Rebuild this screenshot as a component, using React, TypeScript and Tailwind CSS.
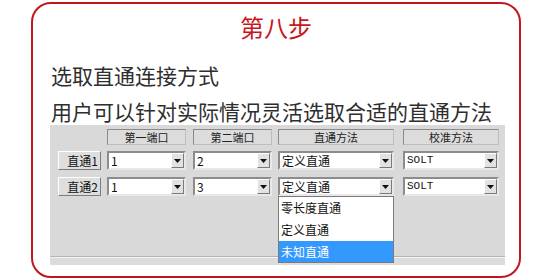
import React from 'react';

const ui = { fontFamily: '"Noto Sans CJK SC", "Liberation Sans", sans-serif' };

const Header: React.FC<{ label: string; w: string; ml: string }> = ({ label, w, ml }) => (
  <div
    className={`${w} ${ml} h-[16px] flex items-center justify-center text-[11px] text-[#222] bg-[#dcdcdc] border border-t-[#8a8a8a] border-l-[#8a8a8a] border-r-[#bdbdbd] border-b-[#bdbdbd] leading-none`}
  >
    {label}
  </div>
);

const Combo: React.FC<{ value: string; w: string; ml: string; serif?: boolean }> = ({ value, w, ml, serif }) => (
  <div
    className={`${w} ${ml} h-[19px] flex items-center bg-white border-2 border-t-[#8c8c8c] border-l-[#8c8c8c] border-r-[#e8e8e8] border-b-[#e8e8e8]`}
  >
    <span
      className="flex-1 pl-[2px] text-[12px] text-[#111] leading-none"
      style={serif ? { fontFamily: '"Liberation Mono", monospace', fontSize: 11 } : undefined}
    >
      {value}
    </span>
    <div className="w-[13px] h-[15px] bg-[#e2e2e2] border border-t-white border-l-white border-r-[#7a7a7a] border-b-[#7a7a7a] flex items-center justify-center">
      <svg width="7" height="4" viewBox="0 0 7 4">
        <path d="M0 0 H7 L3.5 4 Z" fill="#111" />
      </svg>
    </div>
  </div>
);

const RowButton: React.FC<{ label: string }> = ({ label }) => (
  <div className="w-[43px] ml-[8px] h-[19px] flex items-center justify-end pr-[2px] text-[12px] text-[#111] bg-[#dedede] border border-t-white border-l-white border-r-[#7c7c7c] border-b-[#7c7c7c] leading-none">
    {label}
  </div>
);

export default function App() {
  return (
    <div className="w-[550px] h-[280px] bg-white overflow-hidden" style={ui}>
      <div className="ml-[31px] mt-[2px] w-[490px] h-[276px] border-2 border-[#c2161e] rounded-[20px] flex flex-col">
        <div className="mt-[9px] text-center text-[24px] leading-[28px] text-[#c8161d]">第八步</div>
        <div className="mt-[22px] pl-[18px] text-[21px] leading-[24px] text-[#2e2e2e]">选取直通连接方式</div>
        <div className="mt-[12px] pl-[18px] text-[21px] leading-[24px] text-[#2e2e2e]">用户可以针对实际情况灵活选取合适的直通方法</div>

        <div className="relative mt-[2px] ml-[17px] w-[455px] h-[140px] bg-[#d9d9d9] flex flex-col">
          <div className="flex mt-[4px]">
            <div className="w-[51px]" />
            <Header label="第一端口" w="w-[79px]" ml="ml-[6px]" />
            <Header label="第二端口" w="w-[79px]" ml="ml-[7px]" />
            <Header label="直通方法" w="w-[116px]" ml="ml-[6px]" />
            <Header label="校准方法" w="w-[96px]" ml="ml-[9px]" />
          </div>

          <div className="flex mt-[6px]">
            <RowButton label="直通1" />
            <Combo value="1" w="w-[79px]" ml="ml-[6px]" />
            <Combo value="2" w="w-[79px]" ml="ml-[7px]" />
            <Combo value="定义直通" w="w-[116px]" ml="ml-[6px]" />
            <Combo value="SOLT" w="w-[96px]" ml="ml-[9px]" serif />
          </div>

          <div className="flex mt-[7px]">
            <RowButton label="直通2" />
            <Combo value="1" w="w-[79px]" ml="ml-[6px]" />
            <Combo value="3" w="w-[79px]" ml="ml-[7px]" />
            <Combo value="定义直通" w="w-[116px]" ml="ml-[6px]" />
            <Combo value="SOLT" w="w-[96px]" ml="ml-[9px]" serif />
          </div>

          <div className="mt-auto h-[9px] border-t border-[#b4b4b4] bg-[#dcdcdc] shadow-[inset_0_1px_0_#f4f4f4]" />

          {/* open dropdown list */}
          <div className="absolute left-[228px] top-[71px] w-[116px] h-[67px] bg-white border border-[#7a7a7a] flex flex-col text-[12px] text-[#111]">
            <div className="h-[22px] flex items-center pl-[2px]">零长度直通</div>
            <div className="h-[22px] flex items-center pl-[2px]">定义直通</div>
            <div className="flex-1 flex items-center pl-[2px] bg-[#3399ff] text-white">未知直通</div>
          </div>
        </div>
      </div>
    </div>
  );
}
